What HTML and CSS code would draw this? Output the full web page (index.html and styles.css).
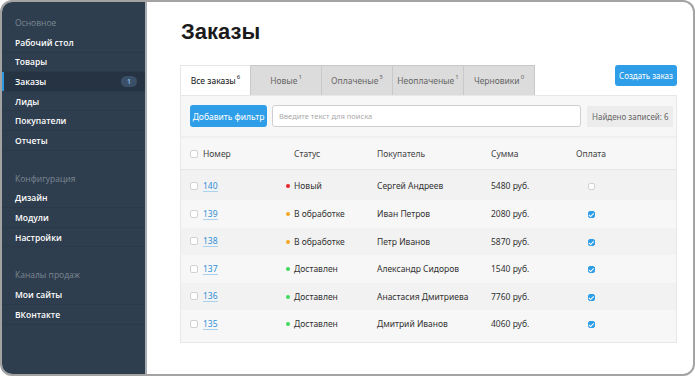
FILE: index.html
```html
<!DOCTYPE html>
<html>
<head>
<meta charset="utf-8">
<link rel="stylesheet" href="styles.css">
</head>
<body>
<div class="window">
  <aside class="sidebar">
    <div class="nav-label">Основное</div>
    <a class="nav-item">Рабочий стол</a>
    <a class="nav-item">Товары</a>
    <a class="nav-item active">Заказы <span class="nav-badge">1</span></a>
    <a class="nav-item">Лиды</a>
    <a class="nav-item">Покупатели</a>
    <a class="nav-item">Отчеты</a>

    <div class="nav-label group">Конфигурация</div>
    <a class="nav-item">Дизайн</a>
    <a class="nav-item">Модули</a>
    <a class="nav-item">Настройки</a>

    <div class="nav-label group">Каналы продаж</div>
    <a class="nav-item">Мои сайты</a>
    <a class="nav-item">ВКонтакте</a>
  </aside>

  <main class="main">
    <h1>Заказы</h1>

    <div class="top-row">
      <div class="tabs">
        <div class="tab active">Все заказы<sup>6</sup></div>
        <div class="tab">Новые<sup>1</sup></div>
        <div class="tab">Оплаченые<sup>5</sup></div>
        <div class="tab">Неоплаченые<sup>1</sup></div>
        <div class="tab">Черновики<sup>0</sup></div>
      </div>
      <button class="btn create">Создать заказ</button>
    </div>

    <div class="panel">
      <div class="toolbar">
        <button class="btn">Добавить фильтр</button>
        <input class="search" type="text" placeholder="Введите текст для поиска">
        <div class="found">Найдено записей: 6</div>
      </div>

      <table class="orders">
        <thead>
          <tr>
            <th class="c-num"><span class="check"></span>Номер</th>
            <th class="c-status">Статус</th>
            <th class="c-buyer">Покупатель</th>
            <th class="c-sum">Сумма</th>
            <th class="c-pay">Оплата</th>
            <th></th>
          </tr>
        </thead>
        <tbody>
          <tr>
            <td><span class="check"></span><a class="num">140</a></td>
            <td><span class="dot red"></span>Новый</td>
            <td>Сергей Андреев</td>
            <td>5480 руб.</td>
            <td class="c-pay"><span class="check small"></span></td>
            <td></td>
          </tr>
          <tr>
            <td><span class="check"></span><a class="num">139</a></td>
            <td><span class="dot orange"></span>В обработке</td>
            <td>Иван Петров</td>
            <td>2080 руб.</td>
            <td class="c-pay"><span class="check small on"></span></td>
            <td></td>
          </tr>
          <tr>
            <td><span class="check"></span><a class="num">138</a></td>
            <td><span class="dot orange"></span>В обработке</td>
            <td>Петр Иванов</td>
            <td>5870 руб.</td>
            <td class="c-pay"><span class="check small on"></span></td>
            <td></td>
          </tr>
          <tr>
            <td><span class="check"></span><a class="num">137</a></td>
            <td><span class="dot green"></span>Доставлен</td>
            <td>Александр Сидоров</td>
            <td>1540 руб.</td>
            <td class="c-pay"><span class="check small on"></span></td>
            <td></td>
          </tr>
          <tr>
            <td><span class="check"></span><a class="num">136</a></td>
            <td><span class="dot green"></span>Доставлен</td>
            <td>Анастасия Дмитриева</td>
            <td>7760 руб.</td>
            <td class="c-pay"><span class="check small on"></span></td>
            <td></td>
          </tr>
          <tr>
            <td><span class="check"></span><a class="num">135</a></td>
            <td><span class="dot green"></span>Доставлен</td>
            <td>Дмитрий Иванов</td>
            <td>4060 руб.</td>
            <td class="c-pay"><span class="check small on"></span></td>
            <td></td>
          </tr>
        </tbody>
      </table>
    </div>
  </main>
</div>
</body>
</html>
```

FILE: styles.css
```css
* {box-sizing: border-box;}

body {
  margin: 0;
  background: #fff;
  font-family: "Noto Sans", Arial, sans-serif;
}

.window {
  display: flex;
  width: 695px;
  height: 376px;
  border: 2px solid #a3a3a3;
  border-radius: 12px;
  overflow: hidden;
  background: #fff;
}

/* sidebar */
.sidebar {
  width: 145px;
  flex-shrink: 0;
  background: #2f3e4e;
  border-right: 2px solid #a9adb1;
  padding-top: 11px;
  font-family: "Open Sans", Arial, sans-serif;
}

.nav-label {
  height: 20px;
  line-height: 20px;
  padding-left: 13px;
  font-size: 8.5px;
  color: #7b8793;
}
.nav-label.group {
  margin-top: 18px;
}

.nav-item {
  display: flex;
  align-items: center;
  justify-content: space-between;
  height: 19.6px;
  padding: 0 8px 0 13px;
  font-size: 8.5px;
  font-weight: 600;
  color: #fff;
  border-bottom: 1px solid #2b3948;
}
.nav-item.active {
  background: #253342;
  box-shadow: inset 2px 0 0 #2f96e0;
}
.nav-badge {
  background: #3a5068;
  color: #8cc4ee;
  font-size: 7px;
  line-height: 11px;
  padding: 0 6px;
  border-radius: 6px;
}

/* main */
.main {
  flex: 1;
  padding: 14px 16px 0 33px;
  color: #333;
  font-size: 8.5px;
}

h1 {
  margin: 0 0 17px 1px;
  font-family: "Liberation Sans", Arial, sans-serif;
  font-size: 22px;
  line-height: 32px;
  font-weight: 700;
  color: #1b1b1b;
}

.top-row {
  display: flex;
  justify-content: space-between;
  align-items: flex-start;
}

.tabs {
  display: flex;
}
.tab {
  width: 71px;
  height: 30px;
  line-height: 30px;
  text-align: center;
  background: #dcdcdc;
  color: #666;
  border: 1px solid #c9c9c9;
  border-left: none;
  border-bottom: none;
  font-size: 8.5px;
}
.tab.active {
  background: #fff;
  color: #111;
  border-left: 1px solid #e6e6e6;
  border-top-color: #e6e6e6;
}
.tab sup {
  font-size: 6px;
  position: relative;
  top: -4px;
  vertical-align: top;
  margin-left: 1px;
}

.btn {
  height: 21px;
  padding: 0 5px;
  border: none;
  border-radius: 3px;
  background: #2f9ee8;
  color: #fff;
  font-family: inherit;
  font-size: 8.5px;
  white-space: nowrap;
}
.btn.create {
  width: 62px;
  padding: 0;
  font-size: 8px;
}

.panel {
  background: #f7f7f7;
  border: 1px solid #e8e8e8;
  padding-bottom: 4px;
}

.toolbar {
  display: flex;
  align-items: center;
  gap: 5px;
  padding: 9px 2px 9px 9px;
  border-bottom: 2px solid #efefef;
}
.toolbar .btn {
  width: 77px;
  height: 22px;
  padding: 0;
}
.search {
  width: 309px;
  height: 22px;
  border: 1px solid #cfcfcf;
  border-radius: 3px;
  padding: 0 6px;
  font-family: inherit;
  font-size: 7.5px;
  background: #fff;
}
.search::placeholder {
  color: #aaa;
}
.found {
  margin-left: 1px;
  height: 21px;
  line-height: 21px;
  padding: 0 4px 0 5px;
  background: #ececec;
  color: #666;
  font-size: 8px;
  white-space: nowrap;
}

.orders {
  width: 100%;
  border-collapse: collapse;
  table-layout: fixed;
}
.orders th {
  height: 31px;
  font-weight: 400;
  text-align: left;
  color: #444;
  border-bottom: 1px solid #e6e6e6;
  padding: 0;
}
.orders td {
  height: 27.5px;
  padding: 0;
  color: #333;
  white-space: nowrap;
}
.orders tbody tr:nth-child(odd) {
  background: #f2f2f2;
}
.orders tbody tr:first-child td {
  height: 31px;
  padding-top: 2px;
}
.orders th:first-child,
.orders td:first-child {
  padding-left: 9px;
}

.c-num { width: 113px; }
.c-status { width: 83px; }
.c-buyer { width: 114px; }
.c-sum { width: 69px; }
.c-pay { width: 62px; text-align: center !important; }

.check {
  display: inline-block;
  width: 8px;
  height: 8px;
  border: 1px solid #d2d2d2;
  border-radius: 2px;
  background: #fff;
  vertical-align: -1px;
  margin-right: 5px;
}
.check.small {
  width: 7px;
  height: 7px;
  margin: 0;
}
.check.on {
  background: #2f9ee8;
  border-color: #2f9ee8;
  position: relative;
}
.check.on::after {
  content: "";
  position: absolute;
  left: 1.5px;
  top: 0;
  width: 2px;
  height: 3.5px;
  border: solid #fff;
  border-width: 0 1px 1px 0;
  transform: rotate(45deg);
}

.num {
  color: #2f8fd8;
  border-bottom: 1px solid #a8d2f2;
  line-height: 10px;
  display: inline-block;
}

.dot {
  display: inline-block;
  width: 4px;
  height: 4px;
  border-radius: 50%;
  margin-left: -8px;
  margin-right: 4px;
  vertical-align: 1px;
}
.dot.red { background: #e8222a; }
.dot.orange { background: #f5a623; }
.dot.green { background: #3fdb5d; }
```
